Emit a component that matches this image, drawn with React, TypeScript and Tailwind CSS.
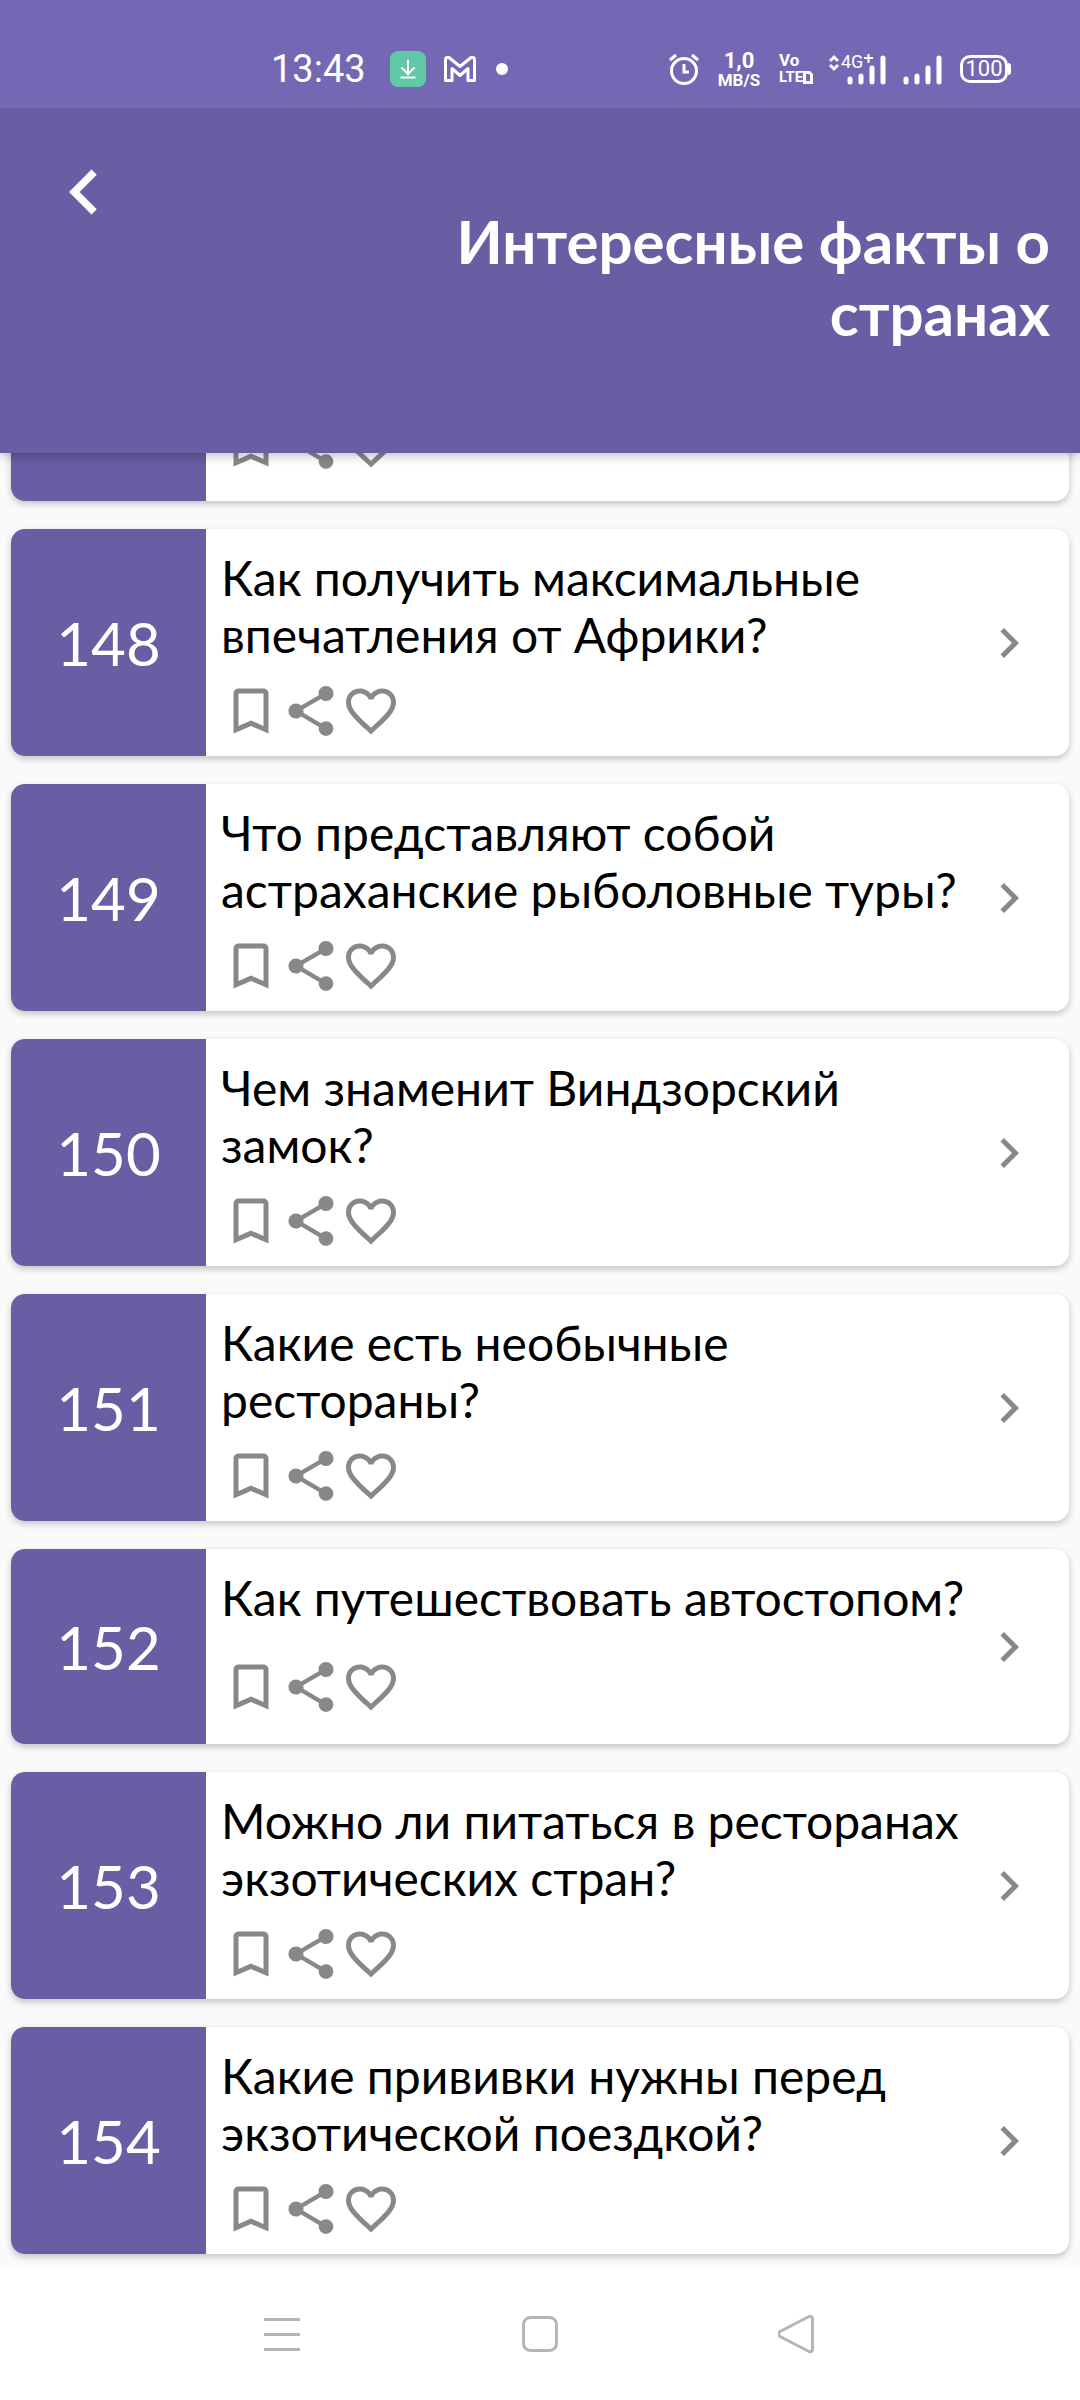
import { useState } from "react";

const facts = [
  { id: 148, title: "Как получить максимальные впечатления от Африки?" },
  { id: 149, title: "Что представляют собой астраханские рыболовные туры?" },
  { id: 150, title: "Чем знаменит Виндзорский замок?" },
  { id: 151, title: "Какие есть необычные рестораны?" },
  { id: 152, title: "Как путешествовать автостопом?" },
  { id: 153, title: "Можно ли питаться в ресторанах экзотических стран?" },
  { id: 154, title: "Какие прививки нужны перед экзотической поездкой?" },
];

const icons = {
  bookmark: "M17 3H7c-1.1 0-1.99.9-1.99 2L5 21l7-3 7 3V5c0-1.1-.9-2-2-2zm0 15l-5-2.18L7 18V5h10v13z",
  share:
    "M18 16.08c-.76 0-1.44.3-1.96.77L8.91 12.7c.05-.23.09-.46.09-.7s-.04-.47-.09-.7l7.05-4.11c.54.5 1.25.81 2.04.81 1.66 0 3-1.34 3-3s-1.34-3-3-3-3 1.34-3 3c0 .24.04.47.09.7L8.04 9.81C7.5 9.31 6.79 9 6 9c-1.66 0-3 1.34-3 3s1.34 3 3 3c.79 0 1.5-.31 2.04-.81l7.12 4.16c-.05.21-.08.43-.08.65 0 1.61 1.31 2.92 2.92 2.92s2.92-1.31 2.92-2.92-1.31-2.92-2.92-2.92z",
  heart:
    "M16.5 3c-1.74 0-3.41.81-4.5 2.09C10.91 3.81 9.24 3 7.5 3 4.42 3 2 5.42 2 8.5c0 3.78 3.4 6.86 8.55 11.54L12 21.35l1.45-1.32C18.6 15.36 22 12.28 22 8.5 22 5.42 19.58 3 16.5 3zm-4.4 15.55l-.1.1-.1-.1C7.14 14.24 4 11.39 4 8.5 4 6.5 5.5 5 7.5 5c1.54 0 3.04.99 3.57 2.36h1.87C13.46 5.99 14.96 5 16.5 5c2 0 3.5 1.5 3.5 3.5 0 2.89-3.14 5.74-7.9 10.05z",
  left: "M15.41 7.41L14 6l-6 6 6 6 1.41-1.41L10.83 12z",
  right: "M10 6L8.59 7.41 13.17 12l-4.58 4.59L10 18l6-6z",
};

function Icon({ path, className }: { path: string; className: string }) {
  return (
    <svg viewBox="0 0 24 24" fill="currentColor" className={className} aria-hidden="true">
      <path d={path} />
    </svg>
  );
}

function StatusBar() {
  return (
    <div className="flex h-[108px] items-center justify-between bg-[#7468b4] pt-[30px] pr-[69px] pl-[271px] font-['Roboto',sans-serif] text-white">
      <div className="flex items-center">
        <span className="w-[119px] text-[38px] leading-[36px]">13:43</span>
        <svg viewBox="0 0 36 36" className="size-9" fill="none" stroke="#fff" strokeWidth="2">
          <rect width="36" height="36" rx="8" fill="#62c9a8" stroke="none" />
          <path d="M18 9v14M11.5 16.5l6.5 6.5 6.5-6.5M10.5 26.5h15" />
        </svg>
        <svg viewBox="0 0 32 26" className="ml-[18px] h-[26px] w-8" fill="none" stroke="#fff" strokeWidth="3" strokeLinejoin="round">
          <path d="M1.500 3.500q0-2 2-2h1.500l11 9 11-9h1.500q2 0 2 2v21h-6.500v-12l-8 7-8-7v12h-6.500z" />
        </svg>
        <span className="ml-5 size-3 rounded-full bg-white" />
      </div>

      <div className="flex items-center">
        <svg viewBox="0 0 30 32" className="h-8 w-[30px]" fill="none" stroke="#fff" strokeWidth="3">
          <circle cx="15" cy="18" r="12.500" />
          <path d="M15 11v8h5M1 7l6-5M29 7l-6-5" />
        </svg>
        <div className="ml-4 flex w-[48px] flex-col items-center">
          <span className="text-[22px] leading-[22px] font-bold">1,0</span>
          <span className="text-[17px] leading-[17px] font-bold">MB/S</span>
        </div>
        <div className="ml-4 flex w-[36px] flex-col font-bold">
          <span className="text-[17px] leading-[17px]">Vo</span>
          <span className="flex items-center text-[15px] leading-[17px]">
            LTE
            <svg viewBox="0 0 10 13" className="h-[13px] w-[10px] shrink-0" fill="none" stroke="#fff" strokeWidth="3">
              <path d="M1.500 1.500h5l2 2v8h-7z" />
            </svg>
          </span>
        </div>
        <div className="relative ml-[14px] h-8 w-[57px]">
          <svg viewBox="0 0 57 32" className="h-8 w-[57px]" fill="none" stroke="#fff">
            <path d="M1 8l4-4 4 4M1 12l4 4 4-4" strokeWidth="3" />
            <path d="M21 26v3M32 23v6M43 15v14M54 5v24" strokeWidth="5" strokeLinecap="round" />
            <path d="M35 5h9M39.500 1v9" strokeWidth="2" />
          </svg>
          <span className="absolute top-0 left-3 text-[18px] leading-[18px]">4G</span>
        </div>
        <svg viewBox="0 0 39 32" className="ml-[17px] h-8 w-[39px]" fill="none" stroke="#fff" strokeWidth="5" strokeLinecap="round">
          <path d="M3 26v3M14 23v6M25 15v14M36 5v24" />
        </svg>
        <div className="ml-[18px] flex items-center">
          <span className="flex h-[28px] w-[48px] items-center justify-center rounded-[10px] border-[3px] border-white text-[22px] leading-[22px]">
            100
          </span>
          <span className="h-3 w-[3px] rounded-r bg-white" />
        </div>
      </div>
    </div>
  );
}

function FactCard({ id, title }: { id?: number; title?: string }) {
  const [saved, setSaved] = useState(false);
  const [liked, setLiked] = useState(false);

  return (
    <li className="flex min-h-[195px] overflow-hidden rounded-[14px] bg-white shadow-[0_3px_7px_rgba(0,0,0,0.22)]">
      <div className="flex w-[195px] shrink-0 items-center justify-center bg-[#695da3] text-[60px] leading-[72px] text-white">
        {id}
      </div>
      <div className="flex min-w-0 flex-1 flex-col pt-5 pb-[15px] pl-[15px]">
        <h2 className="min-h-[57px] text-[48px] leading-[57px] text-black">{title}</h2>
        <div className="flex flex-1 items-center pt-[18px] text-[#888888]">
          <button aria-label="В закладки" aria-pressed={saved} onClick={() => setSaved(!saved)}>
            <Icon path={icons.bookmark} className="size-[60px]" />
          </button>
          <button aria-label="Поделиться">
            <Icon path={icons.share} className="size-[60px]" />
          </button>
          <button aria-label="Нравится" aria-pressed={liked} onClick={() => setLiked(!liked)}>
            <Icon path={icons.heart} className="size-[60px]" />
          </button>
        </div>
      </div>
      <button aria-label="Открыть" className="mr-[30px] shrink-0 text-[#888888]">
        <Icon path={icons.right} className="size-[60px]" />
      </button>
    </li>
  );
}

function NavBar() {
  return (
    <nav className="relative grid h-[132px] grid-cols-3 items-center justify-items-center bg-white px-[153px]">
      <button aria-label="Меню">
        <svg viewBox="0 0 40 40" className="size-10" fill="none" stroke="#b5b5b5" strokeWidth="3">
          <path d="M2 5.500h36M2 20.500h36M2 35.500h36" />
        </svg>
      </button>
      <button aria-label="Домой">
        <svg viewBox="0 0 40 40" className="size-10" fill="none" stroke="#b5b5b5" strokeWidth="3">
          <rect x="3.500" y="3.500" width="33" height="33" rx="7" />
        </svg>
      </button>
      <button aria-label="Назад">
        <svg viewBox="0 0 40 40" className="size-10" fill="none" stroke="#b5b5b5" strokeWidth="3" strokeLinejoin="round">
          <path d="M31 2.500L2 17.500q-3 2.500 0 5L31 37.500q3.500 1 3.500-3v-29q0-4-3.500-3z" />
        </svg>
      </button>
    </nav>
  );
}

export default function App() {
  return (
    <div className="flex min-h-screen flex-col bg-[#fafafa] font-['Lato','Carlito',sans-serif]">
      <div className="relative z-10 shadow-[0_3px_10px_rgba(0,0,0,0.25)]">
        <StatusBar />
        <header className="flex min-h-[345px] items-start justify-between bg-[#695da3] pr-[30px] pl-[39px] text-white">
          <button aria-label="Назад" className="mt-[39px]">
            <Icon path={icons.left} className="size-[90px]" />
          </button>
          <h1 className="mt-[97px] max-w-[640px] text-right text-[60px] leading-[72px] font-bold">
            Интересные факты о странах
          </h1>
        </header>
      </div>

      {/* list is scrolled, the first card is mostly under the header */}
      <main className="flex-1 overflow-hidden">
        <ul className="-mt-[147px] flex flex-col gap-7 px-[11px] pb-[14px]">
          <FactCard />
          {facts.map((fact) => (
            <FactCard key={fact.id} id={fact.id} title={fact.title} />
          ))}
        </ul>
      </main>

      <NavBar />
    </div>
  );
}
